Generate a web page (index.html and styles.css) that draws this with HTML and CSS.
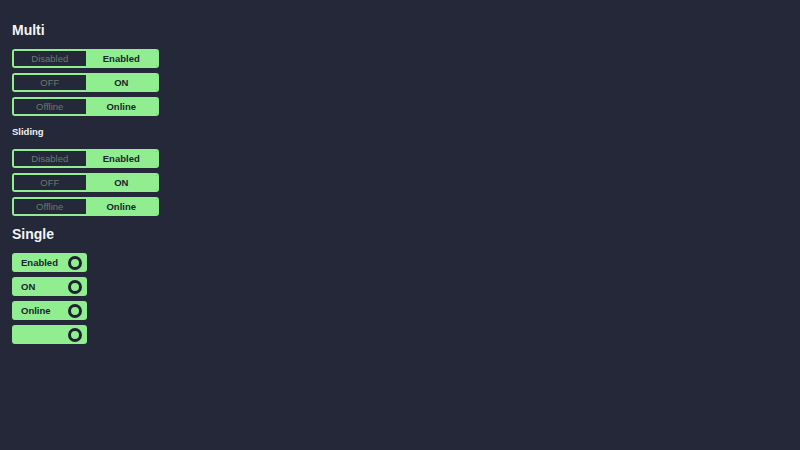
FILE: index.html
```html
<!DOCTYPE html>
<html>
<head>
<meta charset="utf-8">
<link rel="stylesheet" href="styles.css">
</head>
<body>
<main class="page">
  <h2 class="title">Multi</h2>
  <div class="group">
    <div class="toggle"><span class="opt off">Disabled</span><span class="opt on">Enabled</span></div>
    <div class="toggle"><span class="opt off">OFF</span><span class="opt on">ON</span></div>
    <div class="toggle"><span class="opt off">Offline</span><span class="opt on">Online</span></div>
  </div>
  <h4 class="subtitle">Sliding</h4>
  <div class="group">
    <div class="toggle"><span class="opt off">Disabled</span><span class="opt on">Enabled</span></div>
    <div class="toggle"><span class="opt off">OFF</span><span class="opt on">ON</span></div>
    <div class="toggle"><span class="opt off">Offline</span><span class="opt on">Online</span></div>
  </div>
  <h2 class="title">Single</h2>
  <div class="group">
    <div class="single"><span class="label">Enabled</span><span class="knob"></span></div>
    <div class="single"><span class="label">ON</span><span class="knob"></span></div>
    <div class="single"><span class="label">Online</span><span class="knob"></span></div>
    <div class="single"><span class="label"></span><span class="knob"></span></div>
  </div>
</main>
</body>
</html>
```
FILE: styles.css
```css
html, body {
  margin: 0;
  padding: 0;
  background: #252838;
}
body {
  font-family: "Liberation Sans", Arial, sans-serif;
  color: #ffffff;
}
.page {
  padding: 21px 12px 0 12px;
  display: flex;
  flex-direction: column;
  align-items: flex-start;
}
.title {
  margin: 0;
  font-size: 14px;
  line-height: 18px;
  font-weight: bold;
  color: #f4f4f6;
}
.subtitle {
  margin: 1px 0 0 0;
  font-size: 9.5px;
  line-height: 12px;
  font-weight: bold;
  color: #f0f0f2;
}
.group {
  display: flex;
  flex-direction: column;
  gap: 5px;
  margin-top: 10px;
  margin-bottom: 9px;
}
.subtitle + .group { margin-top: 11px; }
.toggle {
  display: flex;
  width: 147px;
  height: 19px;
  box-sizing: border-box;
  border: 2px solid #90ee90;
  border-radius: 3px;
  overflow: hidden;
}
.opt {
  flex: 1;
  display: flex;
  align-items: center;
  justify-content: center;
  font-size: 9.5px;
}
.opt.off {
  background: #252838;
  color: #6a7a6d;
}
.opt.on {
  background: #90ee90;
  color: #1d2230;
  font-weight: bold;
}
.single {
  display: flex;
  align-items: center;
  justify-content: space-between;
  width: 75px;
  height: 19px;
  box-sizing: border-box;
  padding: 0 5px 0 9px;
  background: #90ee90;
  border-radius: 3px;
}
.label {
  font-size: 9.5px;
  font-weight: bold;
  color: #1d2230;
}
.knob {
  width: 14px;
  height: 14px;
  box-sizing: border-box;
  border: 3px solid #1d2230;
  border-radius: 50%;
}
```
